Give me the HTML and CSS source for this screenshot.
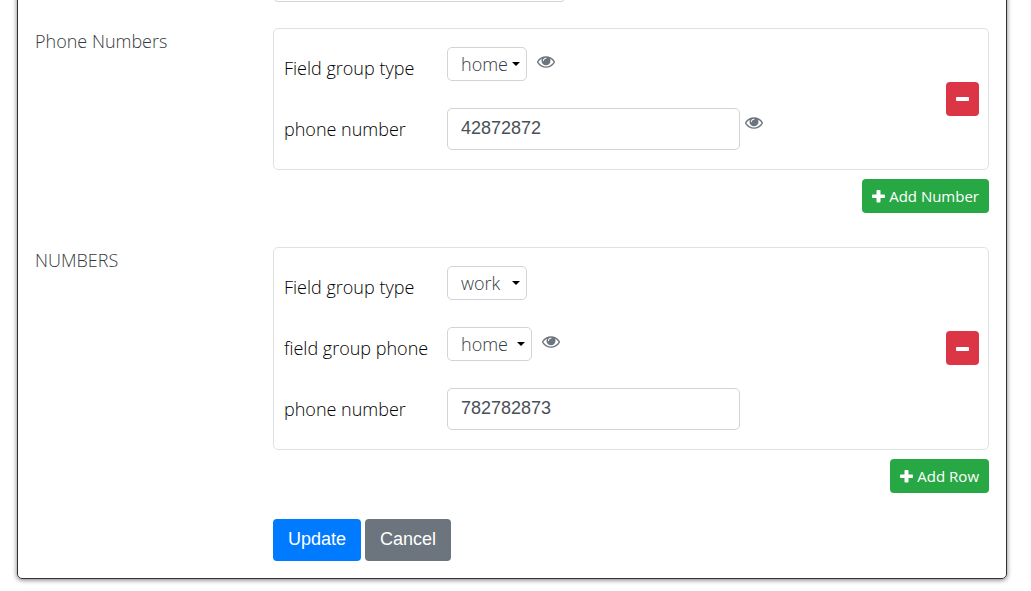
FILE: index.html
```
<!DOCTYPE html>
<html lang="en">
<head>
  <meta charset="utf-8">
  <title>Edit Contact</title>
  <link rel="stylesheet" href="styles.css">
</head>
<body>
  <!-- Shared icons -->
  <svg class="sprite" aria-hidden="true">
    <symbol id="icon-eye" viewBox="0 0 1792 1152">
      <path d="M1664 576q-152-236-381-353 61 104 61 225 0 185-131.500 316.500t-316.500 131.500-316.500-131.500-131.500-316.500q0-121 61-225-229 117-381 353 133 205 333.500 326.500t434.500 121.500 434.500-121.500 333.500-326.500zM944 192q0-20-14-34t-34-14q-125 0-214.500 89.500t-89.500 214.500q0 20 14 34t34 14 34-14 14-34q0-86 61-147t147-61q20 0 34-14t14-34zM1792 576q0 34-20 69-140 230-376.500 368.500t-499.500 138.500-499.500-139-376.500-368q-20-35-20-69t20-69q140-229 376.500-368t499.500-139 499.500 139 376.500 368q20 35 20 69z"/>
    </symbol>
    <symbol id="icon-plus" viewBox="0 0 13 13">
      <path d="M5.800 0h1.900q.8 0 .8.800V4.500h3.700q.8 0 .8.800v2q0 .8-.8.800H8.500v3.700q0 .8-.8.800H5.300q-.8 0-.8-.8V8.100H.8q-.8 0-.8-.8v-2q0-.8.800-.8h3.700V.8q0-.8.800-.8z"/>
    </symbol>
    <symbol id="icon-minus" viewBox="0 0 13 13">
      <rect x="0" y="5" width="13" height="4" rx="0.800"/>
    </symbol>
  </svg>

  <form class="panel">
    <div class="section section-previous">
      <div class="section-label"></div>
      <div class="section-body">
        <input class="form-control" type="text" aria-label="Previous field">
      </div>
    </div>

    <!-- Phone Numbers -->
    <div class="section">
      <div class="section-label">Phone Numbers</div>
      <div class="section-body">
        <div class="group">
          <div class="group-fields">
            <div class="field">
              <label for="phoneType">Field group type</label>
              <div class="field-control">
                <select id="phoneType" class="form-select">
                  <option selected>home</option>
                  <option>work</option>
                </select>
                <svg class="eye eye-select"><use href="#icon-eye"/></svg>
              </div>
            </div>
            <div class="field">
              <label for="phoneNumber">phone number</label>
              <div class="field-control">
                <input id="phoneNumber" class="form-control" type="text" value="42872872">
                <svg class="eye"><use href="#icon-eye"/></svg>
              </div>
            </div>
          </div>
          <button type="button" class="btn-sm btn-danger" aria-label="Remove number"><svg class="icon"><use href="#icon-minus"/></svg></button>
        </div>
        <button type="button" class="btn-sm btn-success"><svg class="icon"><use href="#icon-plus"/></svg>Add Number</button>
      </div>
    </div>

    <!-- NUMBERS -->
    <div class="section">
      <div class="section-label">NUMBERS</div>
      <div class="section-body">
        <div class="group">
          <div class="group-fields">
            <div class="field">
              <label for="numbersType">Field group type</label>
              <div class="field-control">
                <select id="numbersType" class="form-select">
                  <option>home</option>
                  <option selected>work</option>
                </select>
              </div>
            </div>
            <div class="field">
              <label for="numbersPhone">field group phone</label>
              <div class="field-control">
                <select id="numbersPhone" class="form-select form-select-wide">
                  <option selected>home</option>
                  <option>work</option>
                </select>
                <svg class="eye eye-select"><use href="#icon-eye"/></svg>
              </div>
            </div>
            <div class="field">
              <label for="numbersNumber">phone number</label>
              <div class="field-control">
                <input id="numbersNumber" class="form-control" type="text" value="782782873">
              </div>
            </div>
          </div>
          <button type="button" class="btn-sm btn-danger" aria-label="Remove row"><svg class="icon"><use href="#icon-minus"/></svg></button>
        </div>
        <button type="button" class="btn-sm btn-success"><svg class="icon"><use href="#icon-plus"/></svg>Add Row</button>
      </div>
    </div>

    <div class="actions">
      <button type="submit" class="btn btn-primary">Update</button>
      <button type="button" class="btn btn-secondary">Cancel</button>
    </div>
  </form>
</body>
</html>
```
FILE: styles.css
```
* {
  box-sizing: border-box;
}

body {
  margin: 0;
  padding-bottom: 12px;
  background-color: #fff;
  color: #212529;
  font-family: "Segoe UI", "Open Sans", sans-serif;
  font-size: 18px;
  font-weight: 300;
  line-height: 27px;
}

.sprite {
  display: none;
}

/* Main panel, its top is scrolled out of view */
.panel {
  margin: -60px 24px 0 17px;
  padding: 19px 17px 17px;
  border: 1px solid #333;
  border-radius: 5px;
  box-shadow: 0 1px 5px #777;
}

.section {
  display: grid;
  grid-template-columns: 238px 1fr;
  margin-bottom: 34px;
}

.section-previous {
  margin-bottom: 26px;
}

.section-label {
  color: #343a40;
}

.section-body {
  display: flex;
  flex-direction: column;
  align-items: flex-start;
  gap: 9px;
}

/* Field group */
.group {
  display: flex;
  align-items: center;
  width: 100%;
  padding: 18px 9px 19px 10px;
  border: 1px solid #dee2e6;
  border-radius: 5px;
}

.group-fields {
  display: flex;
  flex-direction: column;
  flex: 1;
  gap: 19px;
}

.field {
  display: grid;
  grid-template-columns: 163px 1fr;
  align-items: center;
  min-height: 42px;
}

.field label {
  color: #000;
}

.field-control {
  display: flex;
  align-items: flex-start;
  align-self: start;
}

.form-control,
.form-select {
  margin: 0;
  border: 1px solid #ced4da;
  border-radius: 5px;
  background-color: #fff;
  color: #495057;
}

.form-control {
  width: 100%;
  max-width: 293px;
  height: 42px;
  padding: 0 13px 2px;
  font-family: "Liberation Sans", Arial, sans-serif;
  font-size: 18px;
}

.form-select {
  appearance: none;
  width: 80px;
  height: 34px;
  padding: 0 0 0 13px;
  color: #343a40;
  font-family: inherit;
  font-size: 18px;
  font-weight: 300;
  background-image: url("data:image/svg+xml,%3Csvg xmlns='http://www.w3.org/2000/svg' width='8' height='4'%3E%3Cpath d='M0 0h8L4 4z'/%3E%3C/svg%3E");
  background-repeat: no-repeat;
  background-position: right 6px center;
}

.form-select-wide {
  width: 85px;
}

.eye {
  flex: none;
  width: 18px;
  height: 12px;
  margin: 9px 0 0 5px;
  fill: #6c757d;
}

.eye-select {
  margin-left: 10px;
}

/* Buttons */
.btn,
.btn-sm {
  border: none;
  border-radius: 4px;
  color: #fff;
  cursor: pointer;
}

.btn {
  height: 42px;
  padding: 0 15px 2px;
  font-family: "Liberation Sans", Arial, sans-serif;
  font-size: 18px;
}

.btn-sm {
  display: flex;
  align-items: center;
  gap: 4px;
  height: 34px;
  padding: 0 10px;
  font-family: inherit;
  font-size: 15px;
}

.icon {
  width: 13px;
  height: 13px;
  fill: #fff;
}

.btn-danger {
  background-color: #dc3545;
}

.btn-success {
  align-self: flex-end;
  background-color: #28a745;
}

.btn-primary {
  background-color: #007bff;
}

.btn-secondary {
  background-color: #6c757d;
}

.actions {
  display: flex;
  gap: 4px;
  margin: -8px 0 0 238px;
}
```
